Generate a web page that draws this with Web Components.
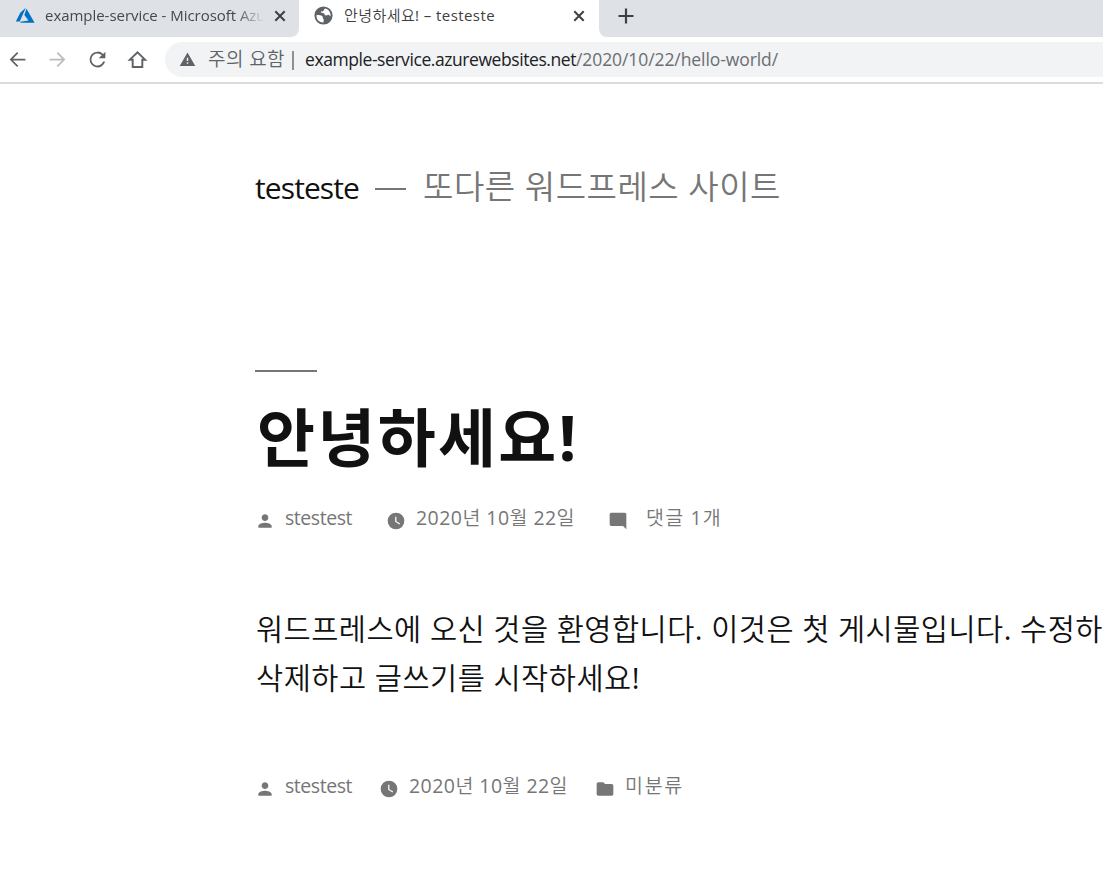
<!DOCTYPE html>
<html lang="ko">
<head>
<meta charset="utf-8">
<title>안녕하세요! – testeste</title>
<style>
html,
body {
        background: #fff;
        height: 873px;
        margin: 0;
        overflow: hidden;
        width: 1103px;
}

body {
        font-family: "Open Sans", "Noto Sans CJK KR DemiLight", "Noto Sans CJK KR", sans-serif;
}
</style>
</head>
<body>
<browser-window>
        <browser-tab slot="tabs" icon="azure" wide>
                <text-run width="235">example-service - Microsoft Azure</text-run>
        </browser-tab>
        <browser-tab slot="tabs" icon="globe" active>
                <text-run width="151">안녕하세요! – testeste</text-run>
        </browser-tab>
        <address-bar slot="address">
                <text-run slot="security" width="77">주의 요함</text-run>
                <text-run slot="host" width="271">example-service.azurewebsites.net</text-run>
                <text-run slot="path" width="202">/2020/10/22/hello-world/</text-run>
        </address-bar>

        <site-header>
                <text-run slot="name" width="104">testeste</text-run>
                <text-run slot="tagline" width="358">또다른 워드프레스 사이트</text-run>
        </site-header>
        <blog-entry>
                <text-run slot="title" width="322">안녕하세요!</text-run>
                <entry-meta slot="meta">
                        <meta-item icon="person" style="width: 131px"><text-run width="67">stestest</text-run></meta-item>
                        <meta-item icon="clock" style="width: 222px"><text-run width="159">2020년 10월 22일</text-run></meta-item>
                        <meta-item icon="comment" style="--gap: 18px"><text-run width="76">댓글 1개</text-run></meta-item>
                </entry-meta>
                <text-run width="847">워드프레스에 오신 것을 환영합니다. 이것은 첫 게시물입니다. 수정하</text-run>
                <text-run width="384">삭제하고 글쓰기를 시작하세요!</text-run>
                <entry-meta slot="footer">
                        <meta-item icon="person" style="width: 124px"><text-run width="67">stestest</text-run></meta-item>
                        <meta-item icon="clock" style="width: 216px"><text-run width="159">2020년 10월 22일</text-run></meta-item>
                        <meta-item icon="folder"><text-run width="59">미분류</text-run></meta-item>
                </entry-meta>
        </blog-entry>
</browser-window>

<script>
const icons = {
        azure: [24, '<path fill="#0072c6" d="M13 2 6.3 8 1 18.7h4.7L13 2Zm.8 1.4-2.600 7.500 5 6.400-9.700 1.700V20H23.500L13.800 3.400Z"/>'],
        globe: [24, '<circle cx="12" cy="12" r="11.5"/><path fill="#fff" d="M3.2 11.5c3 .1 6.800.6 7.500 1.500.6 1.200-.1 2.700 1 3.100.9.3.6 2.500.2 4.700C6 21 2.500 16.500 3.200 11.500ZM14.500 3.200c4 1.200 6.700 4.700 6.500 9.600-1-.3-1.500-1.900-3-1.900-1.600 0-2.100 1.600-3.600.9-1.500-.7-.6-2.700-2.200-2.800-1.500-.1-3.800.1-3.500-1.300.2-1 2.500-.5 3.200-1.300.8-.9.2-2.700 2.600-3.200Z"/>'],
        close: [12, '<path fill="none" stroke="currentColor" stroke-width="2" d="m1.300 1.300 9.400 9.400m0-9.400-9.400 9.400"/>'],
        plus: [16, '<path d="M6.900 0.500h2.200v6.400h6.400v2.200H9.100v6.400H6.900V9.100H.5V6.900h6.400z"/>'],
        back: [24, '<path d="M21 11H6.800l6.100-6.100L11.500 3.500 3 12l8.500 8.500 1.400-1.400L6.800 13H21z"/>'],
        forward: [24, '<path d="M3 11h14.200l-6.100-6.100 1.400-1.400L21 12l-8.500 8.500-1.400-1.400 6.100-6.100H3z"/>'],
        reload: [24, '<path d="M18.400 5.600A9 9 0 0 0 12 3a9 9 0 1 0 8.700 11.300h-2.300A6.900 6.900 0 1 1 12 5.100c1.900 0 3.600.8 4.900 2L13.300 10.700H21V3l-2.600 2.600z"/>'],
        home: [24, '<path fill="none" stroke="currentColor" stroke-width="2.200" d="M3.300 12.200 12 3.700l8.700 8.500h-3.200v8.300h-11v-8.300z"/>'],
        warning: [24, '<path fill-rule="evenodd" d="M1 21h22L12 2 1 21zm12-3h-2v-2h2v2zm0-4h-2v-4.500h2V14z"/>'],
        person: [24, '<path d="M12 12c2.210 0 4-1.790 4-4s-1.790-4-4-4-4 1.790-4 4 1.790 4 4 4zm0 2c-2.670 0-8 1.340-8 4v2h16v-2c0-2.660-5.330-4-8-4z"/>'],
        clock: [24, '<path fill-rule="evenodd" d="M12 2a10 10 0 1 0 0 20 10 10 0 0 0 0-20zm4.200 14.200L11 13V7h1.500v5.200l4.500 2.700-.8 1.300z"/>'],
        comment: [24, '<path d="M21.990 4c0-1.100-.89-2-1.990-2H4c-1.100 0-2 .9-2 2v12c0 1.100.9 2 2 2h14l4 4-.01-18z"/>'],
        folder: [24, '<path d="M10 4H4c-1.100 0-1.990.9-1.990 2L2 18c0 1.100.9 2 2 2h16c1.100 0 2-.9 2-2V8c0-1.100-.9-2-2-2h-8l-2-2z"/>'],
}

const icon = (name, size) => {
        const [box, body] = icons[name]
        return `<svg class="icon icon--${name}" viewBox="0 0 ${box} ${box}" width="${size}" height="${size}" fill="currentColor">${body}</svg>`
}

class Block extends HTMLElement {
        constructor () {
                super()
                this.attachShadow({ mode: 'open' })
        }

        connectedCallback () {
                const template = document.createElement('template')
                template.innerHTML = `<style>svg { display: block; flex: none; }</style>${this.render()}`
                this.shadowRoot.replaceChildren(template.content.cloneNode(true))
        }
}

// A single line of text, tracked so that it fills the width it was given
class TextRun extends Block {
        render () {
                return `
                <style>
                :host { display: block; flex: none; white-space: nowrap; }
                </style>
                <span><slot></slot></span>`
        }

        fit () {
                const span = this.shadowRoot.querySelector('span')
                const count = Array.from(this.textContent.trim()).length
                const width = Number(this.getAttribute('width'))

                span.style.letterSpacing = '0px'
                const natural = span.getBoundingClientRect().width
                span.style.letterSpacing = `${(width - natural) / count}px`
                this.style.width = `${width}px`
        }
}

class BrowserWindow extends Block {
        render () {
                return `
                <style>
                :host { display: flex; flex-direction: column; height: 873px; overflow: hidden; width: 1103px; }
                .tabs { display: flex; height: 37px; }
                .rest { background: #dee1e6; border-bottom-left-radius: 8px; box-sizing: border-box; color: #3c4043; flex: 1; padding: 8px 0 0 19px; }
                .toolbar { align-items: center; border-bottom: 2px solid #dadce0; box-sizing: border-box; color: #5f6368; display: flex; height: 47px; padding-left: 7px; }
                .toolbar svg { margin-right: 19px; }
                .toolbar .icon--forward { color: #babcbe; }
                .toolbar .icon--home { margin-right: 17px; }
                .page { padding-left: 255px; }
                </style>
                <div class="tabs"><slot name="tabs"></slot><div class="rest">${icon('plus', 16)}</div></div>
                <div class="toolbar">
                        ${icon('back', 21)}${icon('forward', 21)}${icon('reload', 21)}${icon('home', 21)}
                        <slot name="address"></slot>
                </div>
                <div class="page"><slot></slot></div>`
        }
}

class BrowserTab extends Block {
        render () {
                return `
                <style>
                :host { background: #dee1e6; border-bottom-right-radius: 8px; box-sizing: border-box; color: #45494d; display: flex; font-size: 15px; height: 37px; line-height: 22px; padding: 4px 13px 0 15px; width: 299px; }
                :host([active]) { background: #fff; border-radius: 8px 8px 0 0; color: #3c4043; padding-left: 15px; padding-right: 14px; width: 300px; }
                .icon--azure, .icon--globe { color: #5f6368; margin: 2px 10px 0 0; }
                .icon--globe { margin-right: 11px; }
                .label { flex: 1; overflow: hidden; }
                :host([wide]) .label { -webkit-mask-image: linear-gradient(90deg, #000 190px, transparent 220px); mask-image: linear-gradient(90deg, #000 190px, transparent 220px); }
                .icon--close { color: #3c4043; margin: 6px 0 0 11px; }
                </style>
                ${icon(this.getAttribute('icon'), this.hasAttribute('active') ? 19 : 20)}
                <div class="label"><slot></slot></div>
                ${icon('close', 12)}`
        }
}

class AddressBar extends Block {
        render () {
                return `
                <style>
                :host { align-items: center; background: #f1f3f4; border-radius: 18px 0 0 18px; box-sizing: border-box; display: flex; flex: 1; font-size: 17.5px; height: 35px; line-height: 26px; padding-left: 14px; }
                .icon--warning { margin-right: 12px; }
                .security { color: #5f6368; font-size: 19px; margin-top: -2px; }
                .divider { background: #8d9093; height: 19px; margin: 1px 11px 0 7px; width: 2px; }
                .host, .path { margin-top: -2px; }
                .host { color: #202124; }
                .path { color: #6b6e72; }
                </style>
                ${icon('warning', 17)}
                <div class="security"><slot name="security"></slot></div>
                <div class="divider"></div>
                <div class="host"><slot name="host"></slot></div>
                <div class="path"><slot name="path"></slot></div>`
        }
}

class SiteHeader extends Block {
        render () {
                return `
                <style>
                :host { align-items: baseline; color: #767676; display: flex; font-size: 30px; height: 50px; line-height: 50px; padding-top: 78px; }
                .name { color: #111; }
                .dash { align-self: center; background: #767676; height: 2px; margin: 4px 17px 0 16px; width: 31px; }
                .tagline { font-size: 33px; }
                </style>
                <div class="name"><slot name="name"></slot></div>
                <div class="dash"></div>
                <div class="tagline"><slot name="tagline"></slot></div>`
        }
}

class BlogEntry extends Block {
        render () {
                return `
                <style>
                :host { color: #111; display: block; margin-top: 158px; }
                .rule { background: #767676; height: 2px; width: 62px; }
                .title { font-family: "Open Sans", "Noto Sans CJK KR", sans-serif; font-size: 63px; font-weight: 700; line-height: 90px; margin: 20px 0 0 2px; }
                .meta { margin-top: 22px; }
                .content { font-size: 29.500px; line-height: 49px; margin: 70px 0 0 1px; }
                .footer { margin-top: 70px; }
                </style>
                <div class="rule"></div>
                <div class="title"><slot name="title"></slot></div>
                <div class="meta"><slot name="meta"></slot></div>
                <div class="content"><slot></slot></div>
                <div class="footer"><slot name="footer"></slot></div>`
        }
}

class EntryMeta extends Block {
        render () {
                return `
                <style>
                :host { color: #767676; display: flex; font-size: 19.5px; height: 30px; line-height: 28px; }
                </style>
                <slot></slot>`
        }
}

class MetaItem extends Block {
        render () {
                return `
                <style>
                :host { display: flex; }
                svg { margin: 7px var(--gap, 10px) 0 0; }
                </style>
                ${icon(this.getAttribute('icon'), 20)}
                <slot></slot>`
        }
}

window.customElements.define('text-run', TextRun)
window.customElements.define('browser-window', BrowserWindow)
window.customElements.define('browser-tab', BrowserTab)
window.customElements.define('address-bar', AddressBar)
window.customElements.define('site-header', SiteHeader)
window.customElements.define('blog-entry', BlogEntry)
window.customElements.define('entry-meta', EntryMeta)
window.customElements.define('meta-item', MetaItem)

// Needs every parent to be defined, or the runs have no final font size to measure
document.querySelectorAll('text-run').forEach((run) => run.fit())
</script>
</body>
</html>
